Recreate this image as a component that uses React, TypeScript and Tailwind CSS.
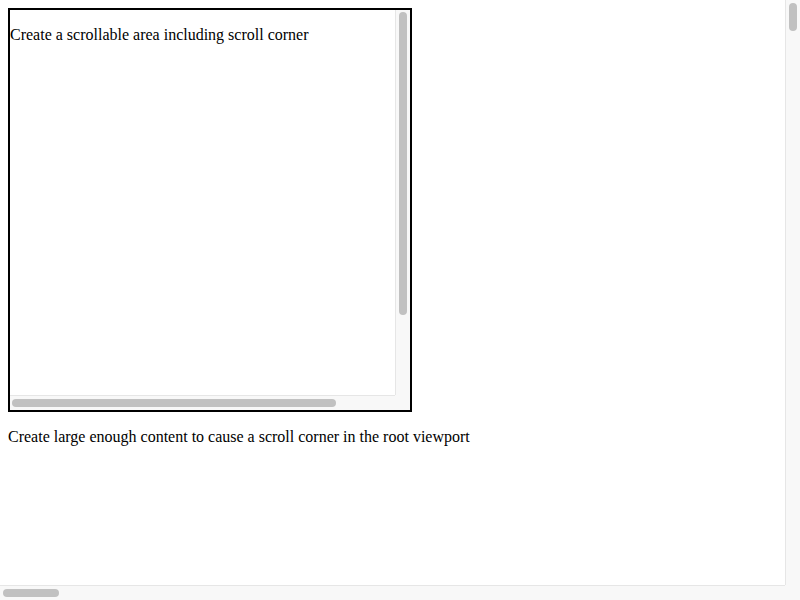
export default function App() {
  return (
    <div className="grid h-[600px] w-[800px] grid-cols-[785px_15px] grid-rows-[585px_15px] overflow-hidden bg-white font-['Liberation_Serif',serif] text-base leading-[normal] text-black">
      <div className="overflow-hidden p-2">
        <div className="grid h-[404px] w-[404px] grid-cols-[385px_15px] grid-rows-[385px_15px] border-2 border-black">
          <div className="overflow-hidden">
            <p className="my-4 whitespace-nowrap">Create a scrollable area including scroll corner</p>
          </div>
          <div className="border-l border-[#e6e6e6] bg-[#f8f8f8] pl-[3px] pt-[2px]">
            <div className="h-[303px] w-2 rounded-full bg-[#c1c1c1]" />
          </div>
          <div className="border-t border-[#e6e6e6] bg-[#f8f8f8] pl-[2px] pt-[3px]">
            <div className="h-2 w-[324px] rounded-full bg-[#c1c1c1]" />
          </div>
          <div className="bg-[#f8f8f8]" />
        </div>
        <p className="my-4 whitespace-nowrap">Create large enough content to cause a scroll corner in the root viewport</p>
      </div>
      <div className="border-l border-[#e6e6e6] bg-[#f8f8f8] pl-[3px] pt-[3px]">
        <div className="h-[28px] w-2 rounded-full bg-[#c1c1c1]" />
      </div>
      <div className="border-t border-[#e6e6e6] bg-[#f8f8f8] pl-[3px] pt-[3px]">
        <div className="h-2 w-[56px] rounded-full bg-[#c1c1c1]" />
      </div>
      <div className="bg-[#f8f8f8]" />
    </div>
  );
}
